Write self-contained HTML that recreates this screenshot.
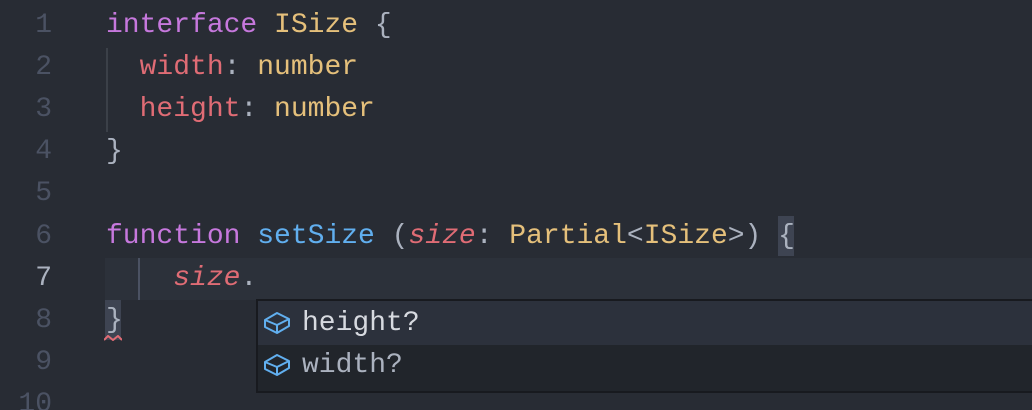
<!DOCTYPE html>
<html><head><style>
html,body{margin:0;padding:0;background:#282c34;width:1032px;height:410px;overflow:hidden}
body{font-family:"Liberation Mono",monospace;font-size:28px;position:relative}
.ln{position:absolute;left:0;width:52px;text-align:right;color:#4b5263;height:42px;line-height:44px}
.l{position:absolute;left:106px;height:42px;line-height:44px;white-space:pre;color:#abb2bf}
.k{color:#c678dd}.t{color:#e5c07b}.p{color:#e06c75}.f{color:#61afef}.i{font-style:italic;color:#e06c75}
.g{position:absolute;width:2px;background:#3b4048}
.pop{position:absolute;left:256px;top:299px;width:780px;height:90px;background:#21252b;border-top:2px solid #181a1f;border-left:2px solid #181a1f;border-bottom:2px solid #181a1f}
.row{position:absolute;left:0;width:100%;height:44px;line-height:46px;color:#d7dae0;white-space:pre}
.row svg{position:absolute;left:4px;top:9px}
.row span{position:absolute;left:44px}
</style></head><body>
<div style="position:absolute;left:105px;top:258px;width:927px;height:42px;background:#2c313a"></div>
<div class="ln" style="top:4px">1</div>
<div class="ln" style="top:46px">2</div>
<div class="ln" style="top:88px">3</div>
<div class="ln" style="top:130px">4</div>
<div class="ln" style="top:172px">5</div>
<div class="ln" style="top:215px">6</div>
<div class="ln" style="top:257px;color:#abb2bf">7</div>
<div class="ln" style="top:299px">8</div>
<div class="ln" style="top:341px">9</div>
<div class="ln" style="top:383px">10</div>
<div class="g" style="left:106px;top:48px;height:84px"></div>
<div class="g" style="left:138px;top:258px;height:42px;background:#4b5263"></div>
<div class="l" style="top:4px"><span class="k">interface</span> <span class="t">ISize</span> {</div>
<div class="l" style="top:46px">  <span class="p">width</span>: <span class="t">number</span></div>
<div class="l" style="top:88px">  <span class="p">height</span>: <span class="t">number</span></div>
<div class="l" style="top:130px">}</div>
<div style="position:absolute;left:778px;top:216px;width:16px;height:40px;background:#3e4452"></div>
<div class="l" style="top:215px"><span class="k">function</span> <span class="f">setSize</span> (<span class="i">size</span>: <span class="t">Partial</span>&lt;<span class="t">ISize</span>&gt;) {</div>
<div class="l" style="top:257px">    <span class="i">size</span>.</div>
<div style="position:absolute;left:105px;top:300px;width:16px;height:40px;background:#3e4452"></div>
<div class="l" style="top:299px">}</div>
<svg style="position:absolute;left:104px;top:335px" width="18" height="6"><path d="M0 5 L4 1 L9 5 L14 1 L18 5" stroke="#e06c75" stroke-width="2" fill="none"/></svg>
<div class="pop">
<div class="row" style="top:0;background:#2c313c"><svg width="30" height="26" viewBox="0 0 30 26"><path d="M3 10 L15 3 L27 9 L27 16 L15 23 L3 17 Z M3 10 L15 15 L27 9 M15 15 L15 23" stroke="#61afef" stroke-width="2" fill="none" stroke-linejoin="round"/></svg><span>height?</span></div>
<div class="row" style="top:44px;height:46px;line-height:42px;color:#abb2bf"><svg width="30" height="26" viewBox="0 0 30 26" style="top:7px"><path d="M3 10 L15 3 L27 9 L27 16 L15 23 L3 17 Z M3 10 L15 15 L27 9 M15 15 L15 23" stroke="#61afef" stroke-width="2" fill="none" stroke-linejoin="round"/></svg><span>width?</span></div>
</div>
</body></html>
